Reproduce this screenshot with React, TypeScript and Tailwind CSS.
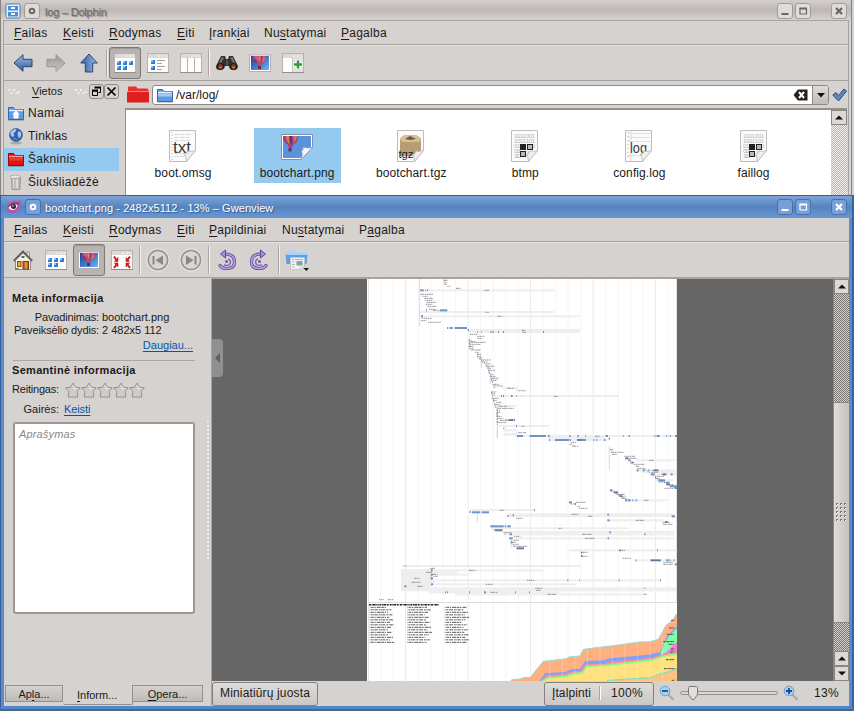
import React from "react";

const sans = "font-['Liberation_Sans',Arial,sans-serif]";

/* ---------- small shared pieces ---------- */

function Accel({ text, at }: { text: string; at: number }) {
  return (
    <>
      {text.slice(0, at)}
      <span className="underline decoration-1 underline-offset-2">{text[at]}</span>
      {text.slice(at + 1)}
    </>
  );
}

type MenuItem = [string, number, string];

function MenuBar({ items }: { items: MenuItem[] }) {
  return (
    <div className="flex h-[23px] shrink-0 items-center pl-[10px] text-[12px] tracking-[0.25px] text-[#1c1a19]">
      {items.map(([t, at, w]) => (
        <div key={t} className={`${w} shrink-0 whitespace-nowrap leading-[16px]`}>
          <Accel text={t} at={at} />
        </div>
      ))}
    </div>
  );
}

function WinButton({ blue, kind }: { blue?: boolean; kind: "min" | "max" | "close" | "pin" }) {
  const c = blue ? "#ffffff" : "#6b6664";
  return (
    <div
      className={`flex size-[16px] shrink-0 items-center justify-center rounded-[3px] border ${
        blue ? "border-[#4a70a8] bg-[#78a0d8]" : "border-[#a39d9a] bg-[#dfdcda]"
      }`}
    >
      <svg width="14" height="14" viewBox="0 0 14 14" fill="none" stroke={c} strokeWidth="2">
        {kind === "min" && <path d="M3.5 10h7" />}
        {kind === "max" && <path d="M4 4.500h6.500v5.500h-6.500z" strokeWidth="1.200" />}
        {kind === "max" && <path d="M3.500 4.500h7.500" />}
        {kind === "close" && <path d="M4 4l6 6M10 4l-6 6" strokeWidth="2.3" />}
        {kind === "pin" && <circle cx="7" cy="7" r="2.300" strokeWidth="1.900" />}
      </svg>
    </div>
  );
}

function Sep({ cls }: { cls: string }) {
  return <div className={`h-[28px] w-[2px] shrink-0 border-l border-[#aaa5a2] bg-[#f5f4f3] ${cls}`} />;
}

function Slot({ cls, children, on }: { cls?: string; children: React.ReactNode; on?: boolean }) {
  return (
    <div
      className={`flex h-[32px] w-[32px] shrink-0 items-center justify-center ${
        on ? "rounded-[3px] border border-[#7d7875] bg-[#b9b4b1] shadow-[inset_0_1px_1px_#9c9794]" : ""
      } ${cls ?? ""}`}
    >
      {children}
    </div>
  );
}

/* ---------- toolbar icons ---------- */

function Arrow({ rot, grey }: { rot: number; grey?: boolean }) {
  const id = `ar${rot}${grey ? "g" : ""}`;
  return (
    <svg width="22" height="22" viewBox="0 0 22 22">
      <defs>
        <linearGradient id={id} x1="0" y1="0" x2="0" y2="1">
          <stop offset="0" stopColor={grey ? "#c9c6c4" : "#9fbce4"} />
          <stop offset="1" stopColor={grey ? "#9b9896" : "#2f5a9b"} />
        </linearGradient>
      </defs>
      <g transform={`rotate(${rot} 11 11)`}>
        <path
          d="M2 11 L11 2.700 V7.300 H20 V14.700 H11 V19.300 Z"
          fill={`url(#${id})`}
          stroke={grey ? "#9a9795" : "#274877"}
          strokeWidth="1"
          strokeLinejoin="round"
        />
      </g>
    </svg>
  );
}

function ViewIcon({ kind }: { kind: "icons" | "details" | "columns" | "add" | "full" }) {
  return (
    <svg width="22" height="22" viewBox="0 0 22 22">
      <rect x=".5" y="1.5" width="21" height="19" fill="#fdfdfd" stroke="#b6b3b1" />
      <rect x="1" y="2" width="20" height="4" fill="#dcdad9" />
      <path d="M11 4h2M15 4h2M18.500 4h1.500" stroke="#fff" />
      <path d="M0 20.500h22" stroke="#918e8c" />
      {kind === "icons" &&
        [
          [3, 9],
          [9, 9],
          [15, 9],
          [3, 14],
          [9, 14],
        ].map(([x, y]) => (
          <g key={`${x}-${y}`}>
            <rect x={x} y={y} width="4" height="4" fill="#2f7bd6" />
            <rect x={x} y={y} width="2" height="2" fill="#8ec4f4" />
          </g>
        ))}
      {kind === "details" && (
        <>
          <rect x="4" y="8" width="4" height="4" fill="#2f7bd6" />
          <rect x="4" y="14" width="4" height="4" fill="#2f7bd6" />
          <path d="M4 9h2M4 15h2" stroke="#8ec4f4" strokeWidth="2" />
          <path d="M10 8.500h8M10 11.500h5M10 14.500h8M10 17.500h5" stroke="#a5a3a1" />
        </>
      )}
      {kind === "columns" && <path d="M7.500 6v14M14.500 6v14" stroke="#b3b0ae" />}
      {kind === "add" && (
        <>
          <rect x="10" y="6" width="11" height="14" fill="#e4e3e2" />
          <path d="M10.500 6v14" stroke="#c4c2c0" />
          <path d="M16 8v9M11.500 12.500h9" stroke="#fff" strokeWidth="4.500" />
          <path d="M16 8.500v8M12 12.500h8" stroke="#2ba12b" strokeWidth="2.500" />
        </>
      )}
      {kind === "full" && (
        <g fill="#d11a1a" stroke="#d11a1a">
          <path d="M3 7.500l2.500 3.500M19 7.500l-2.500 3.500M3 19l2.500-3.500M19 19l-2.500-3.500" strokeWidth="2" />
          <path d="M7 8.500v4H3.500zM15 8.500v4h3.500zM7 18v-4H3.500zM15 18v-4h3.500z" strokeWidth=".6" />
        </g>
      )}
    </svg>
  );
}

function Balloon({ uid }: { uid: string }) {
  return (
    <svg width="22" height="22" viewBox="0 0 22 22">
      <defs>
        <linearGradient id={uid} x1="0" y1="0" x2="1" y2="1">
          <stop offset="0" stopColor="#0d3f99" />
          <stop offset="1" stopColor="#6db4f5" />
        </linearGradient>
      </defs>
      <rect x=".5" y="3" width="21" height="16.500" fill="#fff" stroke="#b4b2b0" />
      <rect x="2" y="4" width="18" height="14" fill={`url(#${uid})`} />
      <path d="M4 4h13q1.500 5-4 8l-1.500 2.500h-2L8 12Q2.500 9 4 4z" fill="#b8457f" />
      <path d="M6 4h3l-.5 4-2-1zM13 4h3l-1 4-3 1z" fill="#dd4f9a" />
      <path d="M9 5l3-1v4l-2 2zM14 8l3-2q-1 3-4 5z" fill="#c98a3e" />
      <path d="M4 6q1 4 4.500 6L7 8zM12 4h1.500q0 4-2 7z" fill="#70357a" />
      <rect x="9" y="14" width="3" height="3" fill="#6d2f35" />
    </svg>
  );
}

function Binoculars() {
  return (
    <svg width="24" height="22" viewBox="0 0 24 22">
      <path d="M6 4l4 0 1 3h2l1-3h4l2 4 3 6q0 4-4.500 4T14 14h-4q-.5 4-5 4T1 14l3-6z" fill="#33302e" />
      <path d="M6.500 5l2.500 1-3 5-2 1zM15 6l2.500-1 3 7-2-1z" fill="#777471" />
      <circle cx="5.500" cy="14.500" r="3" fill="#7d4019" stroke="#111" />
      <circle cx="18.500" cy="14.500" r="3" fill="#7d4019" stroke="#111" />
      <path d="M4 15.500h3M17 15.500h3" stroke="#c9762e" strokeWidth="1.500" />
      <path d="M11 8v5h2V8z" fill="#55524f" />
    </svg>
  );
}

function House() {
  return (
    <svg width="20" height="22" viewBox="0 0 20 22">
      <rect x="14" y="3" width="2.500" height="6" fill="#eee" stroke="#777" strokeWidth=".7" />
      <path d="M2.500 11L10 4l7.500 7v9.500h-15z" fill="#f4efe3" stroke="#77736e" strokeWidth=".8" />
      <path d="M.8 12L10 2.500l9.200 9.500" fill="none" stroke="#55524f" strokeWidth="1.900" />
      <path d="M2 11.500L10 3.500l8 8" fill="none" stroke="#c4c1bd" strokeWidth=".7" strokeDasharray="2 1" />
      <path d="M8.500 8h3" stroke="#333" strokeWidth="1.500" />
      <rect x="4.500" y="12.500" width="3.500" height="5" fill="#f2a52a" stroke="#8a3f13" strokeWidth=".9" />
      <rect x="10" y="12.500" width="5.500" height="7.500" fill="#c96c1c" stroke="#6d3009" strokeWidth=".9" />
      <path d="M13 13v7" stroke="#f4ba4c" />
      <path d="M2 20h4" stroke="#4a8a31" strokeWidth="1.500" />
    </svg>
  );
}

function Nav({ next }: { next?: boolean }) {
  return (
    <svg width="24" height="24" viewBox="0 0 24 24">
      <circle cx="12" cy="12" r="9.700" fill="none" stroke="#f0efee" strokeWidth="3.500" />
      <circle cx="12" cy="12" r="9.700" fill="#d9d6d4" stroke="#999694" strokeWidth="1.800" />
      <g transform={next ? "matrix(-1 0 0 1 24 0)" : undefined} fill="#8a8785">
        <rect x="6.500" y="8" width="2" height="8.500" />
        <path d="M9.500 12.200L17 7.500v9.500z" />
      </g>
    </svg>
  );
}

function Rotate({ right }: { right?: boolean }) {
  return (
    <svg width="20" height="22" viewBox="0 0 20 22">
      <g transform={right ? "matrix(-1 0 0 1 20 0)" : undefined} fill="none">
        <path d="M8 5q9.500 0 9.500 8 0 6.500-7.500 6.500-5 0-7-3" stroke="#5f459a" strokeWidth="3.200" strokeLinecap="round" />
        <path d="M8 5q9.500 0 9.500 8 0 6.500-7.500 6.500-5 0-7-3" stroke="#b7a2e2" strokeWidth="1.600" strokeLinecap="round" />
        <path d="M3.500 5L8.500 1v8z" fill="#a992dc" stroke="#5f459a" strokeLinejoin="round" />
        <path d="M7 16q5.500 1.500 6.500-2.500 0-3-2.500-3.500" stroke="#8267bd" strokeWidth="1.400" />
        <circle cx="9.500" cy="12.500" r="1.500" fill="#7657b5" />
      </g>
    </svg>
  );
}

function FolderPage() {
  return (
    <svg width="26" height="26" viewBox="0 0 26 26">
      <path d="M3 5q0-2 2-2h5l2 2h9q2 0 2 2v8H3z" fill="#b5d2f0" />
      <path d="M1.500 7h22l-1 10h-20z" fill="#5f9fe4" />
      <path d="M2 7.500h21" stroke="#a7d0f8" />
      <path d="M6.500 10.500h14v9l-4 3h-10z" fill="#f2f2f1" stroke="#c5c4c3" />
      <path d="M8 12.500h2M11 12.500h8M8 15h2.500M8 17.500h2.500M8 20h2.500" stroke="#a9b2bc" />
      <rect x="12.500" y="14" width="6" height="3.500" fill="#68a7dc" />
      <path d="M12.500 16h6V18.500h-6z" fill="#9aab58" />
      <path d="M16 22.500l4.500-4-4.500 1z" fill="#fff" stroke="#bbb" strokeWidth=".6" />
      <path d="M19.500 21h5.500l-2.700 3z" fill="#111" />
    </svg>
  );
}

/* ---------- folders, places and files ---------- */

function Folder({ red, home }: { red?: boolean; home?: boolean }) {
  const a = red ? "#e21212" : "#5b9be4";
  const b = red ? "#a80000" : "#2f69b7";
  return (
    <svg width="18" height="16" viewBox="0 0 18 16">
      <path d="M1.500 14.500v-12h5l1.500 2h8.500v10z" fill={a} stroke={b} />
      <path d="M2 5.500h14" stroke={red ? "#ff9a96" : "#e0effd"} strokeWidth="1.500" />
      {!home && <path d="M2 6.500h14v3H2z" fill={red ? "#ea3a36" : "#a5caf3"} />}
      {home && <path d="M9 5.500l4 4h-1.500v4h-5v-4H5z" fill="#fff" />}
      <path d="M1 15.500h16" stroke="#00000030" />
    </svg>
  );
}

function Globe() {
  return (
    <svg width="18" height="18" viewBox="0 0 18 18">
      <ellipse cx="9" cy="16" rx="6" ry="1.500" fill="#aaa7a5" />
      <circle cx="9" cy="8" r="6.500" fill="#2f61b0" stroke="#2a5292" strokeWidth=".6" />
      <path d="M3.500 5q3-3.500 6-3l-1 3-2 1 1 3-2 1-2-2zM11.500 4q2 0 3 3l-1 3-2 1-1-4z" fill="#a9c8ec" />
      <path d="M6 12q3-1 4 1" stroke="#6c9fdb" fill="none" />
    </svg>
  );
}

function Trash() {
  return (
    <svg width="18" height="18" viewBox="0 0 18 18">
      <path d="M4.500 5h9l-.7 11.500H5.200z" fill="#c4c2c0" stroke="#9c9997" />
      <path d="M7 6v9M9 6v9M11 6v9" stroke="#f0efee" />
      <path d="M8 6v9M12 6v9" stroke="#949290" strokeWidth=".7" />
      <path d="M3 3l6-1 5 1.500-1 1.500-9 .5z" fill="#ebeae9" stroke="#a6a3a1" strokeWidth=".8" />
    </svg>
  );
}

function PageIcon({ kind }: { kind: "txt" | "tgz" | "bin" | "log" }) {
  return (
    <svg width="28" height="33" viewBox="0 0 28 33">
      <path d="M.5.5h26v20l-9 11H.5z" fill="#fbfbfb" stroke="#bdbdbc" />
      {kind === "txt" && (
        <>
          <path d="M3 2v28" stroke="#b9b9b9" strokeDasharray="1 2" />
          <path d="M5 4.500h17M5 7.500h15M5 10.500h16M5 23.500h12M5 26.500h10" stroke="#dadada" strokeDasharray="5 1" />
          <text x="4" y="22.500" fontSize="16" fill="#3a3a3a" textLength="18" lengthAdjust="spacingAndGlyphs">txt</text>
        </>
      )}
      {kind === "log" && (
        <>
          <path d="M3 2v28" stroke="#b0b0b0" strokeDasharray="1 3" />
          <path d="M6 1v30" stroke="#f3cfdb" />
          <path d="M3 3.500h22M3 7.500h22M3 11.500h22M3 25.500h15" stroke="#d7e2ee" />
          <text x="5" y="23" fontSize="15" fill="#3a3a3a" textLength="17" lengthAdjust="spacingAndGlyphs">log</text>
        </>
      )}
      {kind === "bin" && (
        <>
          <g fontSize="6" fill="#b4b4b4">
            <text x="3" y="8" textLength="21">1011001</text>
            <text x="3" y="13" textLength="21">1001101</text>
            <text x="3" y="18" textLength="21">0110110</text>
            <text x="3" y="23" textLength="7">011</text>
            <text x="3" y="28" textLength="7">110</text>
          </g>
          <rect x="9.500" y="14.500" width="5" height="5" fill="#222" stroke="#222" />
          <rect x="16.500" y="14.500" width="5" height="5" fill="#b8b8b8" stroke="#222" />
          <rect x="9.500" y="21.500" width="5" height="5" fill="#b8b8b8" stroke="#222" />
        </>
      )}
      {kind === "tgz" && (
        <>
          <path d="M3 9q3-4 6-4h8q4 0 7 4v12l-5 5H3z" fill="#b99d72" />
          <path d="M3 9q3-4 6-4h8q4 0 7 4l-2 3H5z" fill="#d5bf98" />
          <path d="M8 9l5-3 6 3-6 1z" fill="#6e5a3a" />
          <text x="1.500" y="28" fontSize="11" fill="#222" textLength="15" lengthAdjust="spacingAndGlyphs">tgz</text>
        </>
      )}
      <path d="M17 31.500q-.5-5-2.500-6l2-4.500q5 .5 10-.5z" fill="#00000018" />
      <path d="M17.500 31.500q0-5-2-6.500 3-1 3-4 3.500 1 8-.5z" fill="#efefef" stroke="#b4b4b4" strokeWidth=".7" />
    </svg>
  );
}

function PngIcon() {
  return (
    <svg width="32" height="26" viewBox="0 0 32 26">
      <path d="M.5.5h31v13L20 25.500H.5z" fill="#fff" stroke="#7e93ab" />
      <path d="M2 2h28v11.500L19.500 24H2z" fill="#5a92dc" />
      <path d="M2 2h15q1 5-5 9l-1.500 3H8L7 11Q1 7 2 2z" fill="#a83a80" />
      <path d="M5 2h3q-1 4 1 9-4-4-4-9zM13.500 2H16q0 4-4 8 2-4 1.500-8z" fill="#d8853a" />
      <path d="M9 2h2l-.5 8H9.500z" fill="#463184" />
      <path d="M11.500 2h2l-1 5z" fill="#e7569c" />
      <rect x="7.500" y="14" width="3" height="3.500" fill="#733242" />
      <path d="M20 25.500q2-5 .5-8.500 2-1 1.500-4 5 1.500 9.500.5z" fill="#f4f5f8" stroke="#8797aa" strokeWidth=".8" />
    </svg>
  );
}

const files: { name: string; kind: "txt" | "tgz" | "bin" | "log" | "png" }[] = [
  { name: "boot.omsg", kind: "txt" },
  { name: "bootchart.png", kind: "png" },
  { name: "bootchart.tgz", kind: "tgz" },
  { name: "btmp", kind: "bin" },
  { name: "config.log", kind: "log" },
  { name: "faillog", kind: "bin" },
];

const places = [
  { name: "Namai", icon: <Folder home /> },
  { name: "Tinklas", icon: <Globe /> },
  { name: "Šakninis", icon: <Folder red />, on: true },
  { name: "Šiukšliadėžė", icon: <Trash /> },
];

function ScrollBtn({ down, cls }: { down?: boolean; cls?: string }) {
  return (
    <div className={`flex h-[15px] shrink-0 items-center justify-center border border-[#8b8683] bg-[#dcd9d6] ${cls ?? ""}`}>
      <svg width="8" height="5" viewBox="0 0 8 5">
        <path d={down ? "M0 .5h8L4 4.500z" : "M0 4.500h8L4 .5z"} fill="#111" />
      </svg>
    </div>
  );
}

function Dots() {
  return (
    <svg width="13" height="7" viewBox="0 0 13 7" fill="#f0efee">
      <path d="M0 1h2v2H0zM5 1h2v2H5zM2.500 4h2v2h-2zM7.500 4h2v2h-2zM10 3h2v2h-2z" />
    </svg>
  );
}

/* ---------- boot chart ---------- */

type Seg = [number, number, number];

const topGrey: Seg[] = [
  [165, 567, 37], [165, 567, 102], [165, 642, 115], [310, 648, 156], [310, 642, 162],
  [414, 456, 330], [385, 762, 354], [385, 454, 384], [400, 552, 444], [414, 454, 457],
  [414, 454, 469], [456, 936, 474], [550, 730, 486], [550, 720, 480],
];
const topBlue: Seg[] = [
  [166, 176, 37], [180, 182, 37], [186, 189, 37], [224, 247, 97], [183, 186, 97],
  [168, 174, 115], [246, 250, 150], [254, 263, 150], [269, 306, 150],
  [308, 312, 156], [337, 339, 162], [348, 350, 162], [376, 379, 162], [382, 386, 162], [399, 402, 162], [414, 417, 162], [534, 537, 162],
  [456, 474, 474], [494, 543, 474], [549, 554, 474], [613, 617, 474], [637, 641, 474], [660, 662, 474], [722, 729, 474], [774, 776, 474], [791, 795, 474], [868, 871, 474], [875, 884, 474], [904, 907, 474], [915, 918, 474], [930, 936, 474],
  [552, 555, 486], [570, 612, 486], [614, 618, 486], [636, 663, 486], [685, 688, 486], [694, 697, 486], [717, 721, 486], [731, 735, 482],
  [438, 443, 354], [408, 411, 354], [414, 417, 354], [454, 456, 354], [453, 456, 444], [431, 444, 426], [446, 450, 426],
];
const topMarks: Seg[] = [
  [237, 249, 7], [238, 246, 13], [239, 245, 19], [247, 256, 25], [273, 288, 31], [357, 373, 37],
  [167, 204, 49], [172, 190, 55], [178, 204, 61], [180, 205, 67], [185, 215, 73], [182, 202, 79], [187, 214, 85],
  [192, 214, 94], [204, 222, 97], [361, 371, 103], [397, 412, 115], [171, 200, 121], [169, 184, 128], [189, 228, 133],
  [471, 481, 157], [472, 483, 163], [314, 338, 169], [337, 360, 175], [338, 352, 181],
  [312, 320, 187], [314, 363, 193], [314, 346, 199], [315, 326, 205], [314, 325, 211], [318, 348, 216],
  [331, 341, 223], [337, 350, 229], [337, 348, 235], [343, 352, 240], [348, 378, 246], [350, 368, 252],
  [361, 379, 258], [362, 388, 265], [367, 378, 271], [370, 390, 277], [370, 377, 283], [377, 386, 290],
  [377, 394, 296], [380, 400, 301], [378, 397, 307], [387, 404, 319], [389, 413, 324], [427, 446, 331],
  [461, 484, 338], [378, 394, 342], [379, 391, 348], [567, 580, 355], [380, 402, 361], [384, 395, 367],
  [394, 411, 373], [390, 406, 379], [400, 426, 385], [397, 447, 391], [396, 405, 397], [394, 408, 403],
  [394, 400, 409], [394, 410, 415], [397, 415, 421], [405, 448, 427], [395, 424, 433], [470, 478, 445],
  [414, 421, 451], [460, 484, 464], [427, 446, 469], [690, 705, 475], [637, 650, 486], [617, 634, 493], [613, 622, 499], [622, 640, 505],
];
const midGrey: Seg[] = [
  [415, 455, 13], [812, 930, 91], [815, 930, 121], [830, 932, 126], [860, 935, 133], [870, 928, 151], [780, 906, 211],
  [315, 510, 240], [428, 928, 253], [428, 928, 258], [728, 896, 271], [378, 790, 295], [410, 928, 306], [420, 928, 313],
  [430, 926, 325], [612, 936, 361], [811, 932, 391], [114, 648, 408], [108, 534, 421], [108, 278, 427], [108, 306, 434],
  [108, 197, 440], [108, 197, 446], [108, 888, 451], [108, 210, 457], [108, 635, 463], [108, 933, 475], [108, 933, 481],
  [193, 582, 487], [276, 846, 493], [370, 740, 478],
];
const midBlue: Seg[] = [
  [780, 790, 85], [790, 797, 91], [797, 805, 98], [815, 821, 121], [833, 839, 121], [850, 853, 121], [867, 880, 121], [857, 869, 133], [893, 904, 133], [917, 923, 133],
  [880, 900, 151], [902, 914, 158], [905, 914, 163], [914, 936, 169], [928, 936, 174],
  [736, 741, 181], [746, 759, 187], [763, 772, 197], [780, 786, 211], [788, 797, 211], [802, 805, 211], [812, 816, 211],
  [612, 621, 217], [630, 633, 222], [314, 318, 246], [321, 346, 247], [350, 372, 247], [507, 510, 240], [427, 432, 258], [443, 447, 256], [727, 732, 254], [920, 930, 259],
  [727, 734, 271], [900, 908, 276], [376, 416, 289], [419, 424, 289], [427, 437, 289], [390, 412, 301],
  [434, 441, 313], [433, 443, 325], [437, 442, 337], [455, 477, 355], [733, 738, 307], [838, 842, 313], [728, 732, 325],
  [762, 766, 361], [876, 879, 361], [648, 652, 368], [648, 652, 378], [811, 814, 391], [857, 888, 391], [904, 911, 391], [914, 917, 391], [926, 929, 391], [929, 936, 403],
  [198, 203, 421], [197, 203, 434], [197, 204, 445], [198, 204, 463], [118, 124, 469], [607, 610, 451], [642, 644, 451], [761, 764, 451], [885, 888, 451],
  [240, 243, 487], [246, 249, 487], [312, 315, 487], [357, 363, 487], [450, 453, 487], [492, 495, 487],
];
const midMarks: Seg[] = [
  [735, 745, 59], [738, 776, 67], [741, 756, 73], [778, 811, 79], [785, 816, 85], [852, 866, 91], [796, 810, 97], [806, 840, 103],
  [812, 822, 109], [817, 840, 115], [862, 880, 121], [860, 880, 127], [890, 904, 133], [870, 897, 139], [870, 885, 145], [880, 900, 156],
  [903, 926, 164], [898, 924, 175], [735, 748, 181], [747, 760, 187], [755, 780, 193], [763, 782, 199], [769, 787, 205], [837, 850, 211],
  [633, 663, 217], [617, 632, 222], [638, 645, 229], [642, 668, 235], [405, 416, 241], [619, 640, 253], [670, 684, 259], [453, 473, 265],
  [812, 837, 271], [892, 914, 277], [894, 924, 283], [581, 591, 295], [386, 413, 300], [416, 440, 308], [652, 682, 313], [447, 466, 319],
  [660, 688, 325], [445, 460, 331], [440, 452, 337], [443, 462, 343], [444, 487, 349], [455, 477, 355], [764, 781, 361], [648, 668, 367],
  [648, 668, 379], [773, 798, 385], [858, 885, 391], [895, 925, 397], [895, 923, 403], [195, 212, 415], [312, 331, 421], [183, 200, 427],
  [203, 217, 433], [205, 219, 439], [148, 165, 445], [486, 510, 451], [141, 166, 457], [362, 384, 463], [157, 174, 469], [511, 532, 475],
  [514, 528, 481], [376, 398, 487], [548, 573, 493], [42, 56, 509], [68, 86, 509],
];

function Bars({ data, fill, h }: { data: Seg[]; fill: string; h: number }) {
  return (
    <g fill={fill}>
      {data.map(([a, b, y], i) => (
        <rect key={i} x={a} y={y - h / 2} width={b - a} height={h} />
      ))}
    </g>
  );
}

function Marks({ data }: { data: Seg[] }) {
  return (
    <g stroke="#4a4a52" strokeWidth="2.500" opacity=".7">
      {data.map(([a, b, y], i) => (
        <path key={i} d={`M${a} ${y}H${b}`} strokeDasharray={i % 2 ? "4 2 5 1 3 2" : "6 1 4 2 3 1"} />
      ))}
    </g>
  );
}

const legendColors = ["#ffb060", "#ff8a80", "#80c880", "#80e0e0", "#a080ff", "#e080e0"];
const top = "M437 274L440 269L466 267L475 263L496 262L535 214L570 210L604 206L612 201L645 198L655 178L685 174L728 169L775 163L822 156L855 155L880 148L893 124L903 106L922 92L936 70";

function BootChart() {
  const grid = Array.from({ length: 25 }, (_, i) => 380.600 + i * 12.500);
  return (
    <svg className="block shrink-0" width="310" height="402" viewBox="367 279 310 402">
      <rect x="367" y="279" width="310" height="402" fill="#fff" />
      {grid.map((x, i) => (
        <path key={i} d={`M${x} 279V681`} stroke={i % 5 === 2 ? "#ebebeb" : "#f5f5f5"} strokeWidth="1" />
      ))}
      <path d="M368.500 279V681M676.500 279V602" stroke="#e2e2e2" />
      <path d="M368 602.500H677" stroke="#dcdcdc" />
      <g transform="translate(365 278) scale(.33333)">
        <path d="M164 3V145M349 240V270M376 290V318M397 385V480M455 326V340M454 460V476M313 183V216M237 3V22" stroke="#c9c9c9" strokeWidth="2" fill="none" />
        <Bars data={topGrey} fill="#eeeeee" h={6} />
        <Bars data={topBlue} fill="#6d94c4" h={6} />
        <Marks data={topMarks} />
        <path d="M313 185V212M338 226V238L348 246L368 264L376 292L388 330M380 342L388 378L397 398V440" stroke="#7294bd" strokeWidth="3" strokeDasharray="5 4" fill="none" />
        <path d="M317 191h14M420 426h10M197 49h6M408 324h5M469 354h3" stroke="#e0a0a0" strokeWidth="3" />
      </g>
      <g transform="translate(365 430) scale(.33333)">
        <rect x="108" y="418" width="89" height="64" fill="#ececec" />
        <path d="M733 50V120M337 250V276M397 0V24M439 325V352" stroke="#c9c9c9" strokeWidth="2" />
        <Bars data={midGrey} fill="#eeeeee" h={6} />
        <Bars data={midBlue} fill="#6d94c4" h={6} />
        <path d="M838 116L857 130L875 145L910 163L933 172M738 182L782 208M200 416V450" stroke="#7294bd" strokeWidth="3" strokeDasharray="4 4" fill="none" />
        <Marks data={midMarks} />
        <path d="M115 408h11M235 475h2M835 475h7M834 493h12M622 48h10M428 258h4M417 313h5M738 66h6M795 97h6" stroke="#e4a6a6" strokeWidth="3" />
      </g>
      <g transform="translate(365 590) scale(.33333)">
        <path d="M12 44H222" stroke="#222" strokeWidth="4.500" strokeDasharray="6 2 3 1 8 2 4 1 2 2" />
        {[0, 1, 2].map((c) =>
          Array.from({ length: 15 }, (_, r) => {
            const x = 13 + c * 113;
            const y = 52 + r * 7.500;
            return (
              <g key={`${c}-${r}`} strokeWidth="3">
                <path d={`M${x} ${y}h4`} stroke={legendColors[(r * 2 + c) % 6]} />
                <path d={`M${x + 5} ${y}h${48 + ((r * 13 + c * 7) % 23)}`} stroke="#3c3c3c" strokeDasharray={r % 2 ? "5 2 3 1 9 3" : "8 2 4 3 12 2"} opacity=".85" />
              </g>
            );
          }),
        )}
        <path d={`${top}V274Z`} fill="#ffb080" />
        <path d="M522 274L540 250L600 246L620 238L645 236L660 213L715 211L735 205L850 194L885 186L905 140L936 108V274Z" fill="#809fff" />
        <path d="M885 194L898 160L915 135L936 115V190Z" fill="#80ffa8" />
        <path d="M900 190L936 155V195L880 202Z" fill="#f07fd0" />
        <path d="M526 274L545 256L600 252L622 244L648 242L660 223L715 221L735 215L862 203L890 193L936 186V274Z" fill="#ff9090" />
        <path d="M528 274L548 261L600 257L625 248L650 246L664 227L730 223L862 208L890 197L936 189V274Z" fill="#80ff80" />
        <path d="M534 274L550 266L605 262L625 254L652 251L666 232L730 228L862 213L890 202L936 195V274Z" fill="#ffe180" />
        <path d="M730 274L760 270L858 264L885 254L910 247L936 236V274Z" fill="#ffc080" />
        <path d="M725 272L760 269L858 263L885 252L910 246L936 235" stroke="#80dfc0" strokeWidth="4" fill="none" />
        <path d={top} fill="none" stroke="#90ddd8" strokeWidth="3" />
        <path d="M918 91h10M912 114h15M905 133h22M895 155h33M911 163h15M918 177h10M916 186h11M903 209h25M897 236h32M920 271h8" stroke="#554040" strokeWidth="3" strokeDasharray="6 1 3 1" />
        {[555, 592, 630, 667, 705, 742, 780, 817, 855, 892].map((x) => (
          <path key={x} d={`M${x} 110V274`} stroke="#ffffff" opacity=".25" strokeWidth="3" />
        ))}
      </g>
    </svg>
  );
}

/* ---------- windows ---------- */

const checker = "bg-[repeating-conic-gradient(#f2f1f0_0_25%,#b8b4b1_0_50%)] bg-[length:2px_2px]";

function Dolphin() {
  return (
    <div className="h-[195px] w-[852px] shrink-0 overflow-hidden border-l border-r border-[#8b8582] bg-[#d6d2d0]">
      <div className="flex h-[20px] items-center bg-gradient-to-b from-[#d4cfcd] via-[#beb7b4] to-[#d6d2cf] pl-[4px] pt-[1px]">
        <svg width="16" height="16" viewBox="0 0 16 16" className="mr-[3px] shrink-0">
          <rect x="1" y="1" width="14" height="14" rx="1.500" fill="#eaf3fc" stroke="#477db8" />
          <rect x="3" y="3" width="10" height="4.500" fill="#4e8cd0" />
          <rect x="3" y="9" width="10" height="4.500" fill="#4e8cd0" />
          <path d="M6 5h4M6 11h4" stroke="#fff" strokeWidth="2" />
        </svg>
        <WinButton kind="pin" />
        <div className="ml-[5px] flex-1 pt-[2px] text-[11px] leading-[16px] tracking-[-0.2px] text-[#6d6866] [text-shadow:1px_1px_0_#958f8c]">log – Dolphin</div>
        <WinButton kind="min" />
        <div className="w-[2px]" />
        <WinButton kind="max" />
        <div className="w-[20px]" />
        <WinButton kind="close" />
        <div className="w-[4px]" />
      </div>
      <div className="ml-[2px] mr-[2px] h-[175px] border-l border-r border-t border-[#aaa4a1]">
        <MenuBar
          items={[
            ["Failas", 0, "w-[49px]"],
            ["Keisti", 0, "w-[46px]"],
            ["Rodymas", 0, "w-[68px]"],
            ["Eiti", 0, "w-[32px]"],
            ["Įrankiai", 5, "w-[55px]"],
            ["Nustatymai", 2, "w-[77px]"],
            ["Pagalba", 0, "w-[60px]"],
          ]}
        />
        <div className="flex h-[37px] items-center border-b border-t border-[#a7a19e] pl-[3px] pt-[1px] shadow-[inset_0_1px_0_#e6e3e1]">
          <Slot><Arrow rot={0} /></Slot>
          <Slot cls="ml-[1px]"><Arrow rot={180} grey /></Slot>
          <Slot cls="ml-[1px]"><Arrow rot={90} /></Slot>
          <Sep cls="ml-[1px]" />
          <Slot on cls="ml-[1px]"><ViewIcon kind="icons" /></Slot>
          <Slot cls="ml-[1px]"><ViewIcon kind="details" /></Slot>
          <Slot cls="ml-[1px]"><ViewIcon kind="columns" /></Slot>
          <Sep cls="ml-[1px]" />
          <Slot cls="ml-[1px]"><Binoculars /></Slot>
          <Slot cls="ml-[1px]"><Balloon uid="bl1" /></Slot>
          <Slot cls="ml-[1px]"><ViewIcon kind="add" /></Slot>
        </div>
        <div className="flex h-[114px]">
          <div className="w-[121px] shrink-0">
            <div className="flex h-[21px] items-center pl-[4px] text-[11px] text-[#1c1a19]">
              <Dots />
              <span className="ml-[11px] w-[43px]"><Accel text="Vietos" at={0} /></span>
              <Dots />
              {["f", "c"].map((k) => (
                <div key={k} className="ml-[2px] flex size-[13px] shrink-0 items-center justify-center rounded-[2px] outline outline-[#908a87]">
                  <svg width="11" height="11" viewBox="0 0 11 11" fill="none" stroke="#000">
                    {k === "f" ? (
                      <>
                        <path d="M4 1.500h5.500v5H7.500M1.500 5h5v4.500h-5z" />
                        <path d="M3.500 1.500h6.500M1 4.500h6" strokeWidth="2" />
                      </>
                    ) : (
                      <path d="M1.500 1.500l8 8M9.500 1.500l-8 8" strokeWidth="1.700" />
                    )}
                  </svg>
                </div>
              ))}
            </div>
            {places.map((p) => (
              <div
                key={p.name}
                className={`flex h-[23px] w-[115px] items-center pb-[2px] pl-[3px] text-[12px] tracking-[0.3px] text-[#1c1a19] ${p.on ? "bg-[#94caef]" : ""}`}
              >
                {p.icon}
                <span className="ml-[3px]">{p.name}</span>
              </div>
            ))}
          </div>
          <div className="flex flex-1 flex-col">
            <div className="flex h-[27px] shrink-0 items-center pt-[1px]">
              <svg width="24" height="20" viewBox="0 0 24 20" className="ml-[1px] shrink-0">
                <path d="M2 17V2.500q0-1 1-1h7l1.500 2H21q1.500 0 1.500 1.500v12z" fill="#ee2d2d" />
                <path d="M1 7h22v10.500H1z" fill="#df2020" />
                <path d="M1.500 6.500h21" stroke="#ff7d7a" />
              </svg>
              <div className="ml-[2px] flex h-[20px] flex-1 items-stretch overflow-hidden rounded-[3px] border border-[#8e8885] bg-white">
                <div className="flex flex-1 items-center pl-[3px] text-[12px] text-[#1c1a19]">
                  <Folder />
                  <span className="ml-[2px] flex-1">/var/log/</span>
                  <svg width="15" height="12" viewBox="0 0 15 12" className="mr-[4px]">
                    <path d="M.5 6L5 .5h9.500v11H5z" fill="#222" />
                    <path d="M6 3l5 6M11 3L6 9" stroke="#fff" strokeWidth="2" />
                  </svg>
                </div>
                <div className="flex w-[16px] items-center justify-center border-l border-[#8e8885] bg-gradient-to-b from-[#dedbd9] to-[#bfbbb7]">
                  <svg width="8" height="5" viewBox="0 0 8 5"><path d="M0 0h8L4 4.500z" fill="#111" /></svg>
                </div>
              </div>
              <svg width="15" height="14" viewBox="0 0 15 14" className="ml-[3px] mr-[1px] shrink-0">
                <path d="M.8 7L4 4.500 6.500 7.500 12 1l2.500 2L7 12.500H6z" fill="#5b87bd" stroke="#294b77" strokeLinejoin="round" />
              </svg>
            </div>
            <div className="mr-[1px] flex flex-1 border-l border-t-2 border-[#97918e] bg-white">
              <div className="flex flex-1 pt-[18px]">
                {files.map((f) => (
                  <div key={f.name} className="flex w-[114.100px] shrink-0 justify-center">
                    <div className={`flex h-[55px] w-[87px] flex-col items-center ${f.kind === "png" ? "bg-[#94caef]" : ""}`}>
                      <div className="flex h-[37px] items-center justify-center">
                        {f.kind === "png" ? <PngIcon /> : <PageIcon kind={f.kind} />}
                      </div>
                      <div className="whitespace-nowrap text-[12px] leading-[17px] tracking-[0.1px] text-[#1c1a19]">{f.name}</div>
                    </div>
                  </div>
                ))}
              </div>
              <div className={`w-[16px] shrink-0 ${checker}`}>
                <ScrollBtn />
              </div>
            </div>
          </div>
        </div>
      </div>
    </div>
  );
}

function Star() {
  return (
    <svg width="16" height="16" viewBox="0 0 16 16">
      <path d="M8 1l2.300 4.300 5 .5-3.300 3.700.8 5.500H3.200L4 9.500.7 5.800l5-.5z" fill="#cfcdcb" stroke="#94918f" strokeLinejoin="round" />
      <path d="M8 3l1.300 3.300 3 .4" stroke="#f5f5f5" fill="none" />
    </svg>
  );
}

function Magnifier({ plus }: { plus?: boolean }) {
  return (
    <svg width="16" height="16" viewBox="0 0 16 16">
      <path d="M9.500 9.500l5 5" stroke="#8f8d8b" strokeWidth="2" />
      <path d="M10 9.500l4.500 4.500" stroke="#f0efee" strokeWidth=".8" />
      <circle cx="6" cy="6" r="4.800" fill="#a4d2f4" stroke="#7a9cc0" />
      <path d={plus ? "M3 6h6M6 3v6" : "M3 6h6"} stroke="#134f9e" strokeWidth="1.800" />
    </svg>
  );
}

function Sidebar() {
  return (
    <div className="flex w-[208px] shrink-0 flex-col border-r border-[#aaa4a1] text-[11px] leading-[13px] text-[#1c1a19]">
      <div className="flex flex-1">
        <div className="w-[183px] pl-[8px]">
          <div className="pt-[14px] font-bold tracking-[0.3px]">Meta informacija</div>
          <div className="mt-[6px] grid w-[183px] grid-cols-[87px_1fr] gap-x-[4px] whitespace-nowrap">
            <div className="text-right tracking-[-0.150px]">Pavadinimas:</div>
            <div className="-ml-px">bootchart.png</div>
            <div className="text-right tracking-[-0.130px]">Paveiksėlio dydis:</div>
            <div className="-ml-px">2 482x5 112</div>
          </div>
          <div className="mt-[2px] w-[181px] text-right text-[#0057ae]">
            <span className="underline underline-offset-2">Daugiau...</span>
          </div>
          <div className="ml-[1px] mt-[8px] h-[1px] w-[182px] bg-[#aea6a2]" />
          <div className="mt-[3px] font-bold tracking-[0.3px]">Semantinė informacija</div>
          <div className="mt-[4px] flex h-[17px] w-[183px] items-center">
            <span className="w-[53px] tracking-[-0.2px]">Reitingas:</span>
            {[0, 1, 2, 3, 4].map((i) => <Star key={i} />)}
          </div>
          <div className="mt-[5px] flex">
            <span className="w-[47px] text-right">Gairės:</span>
            <span className="ml-[5px] tracking-[-0.1px] text-[#0057ae] underline underline-offset-2">Keisti</span>
          </div>
          <div className="ml-[1px] mt-[6px] h-[192px] w-[182px] rounded-[3px] border-2 border-[#9d9895] bg-white pl-[4px] pt-[4px] italic tracking-[0.150px] text-[#8d8987]">
            Aprašymas
          </div>
        </div>
        <div className="ml-[19px] mt-[143px] h-[139px] w-[4px] bg-[radial-gradient(circle_at_2px_1px,#f4f3f2_1px,#b5b0ad_1.300px,transparent_1.700px)] bg-[length:4px_4px]" />
      </div>
      <div className="flex h-[28px] items-start pt-[7px]">
        <div className="ml-[1px] h-[17px] w-[58px] border border-[#96908d] bg-gradient-to-b from-[#d4d1ce] to-[#bfbbb8] pt-[2px] text-center">
          <Accel text="Apla..." at={2} />
        </div>
        <div className="h-[20px] w-[70px] rounded-b-[2px] border-b border-r border-[#96908d] pl-[14px] pt-[4px]">
          <Accel text="Inform..." at={0} />
        </div>
        <div className="h-[17px] w-[70px] border border-l-0 border-[#96908d] bg-gradient-to-b from-[#d4d1ce] to-[#bfbbb8] pt-[2px] text-center">
          <Accel text="Opera..." at={0} />
        </div>
      </div>
    </div>
  );
}

function Gwenview() {
  return (
    <div className="flex h-[514px] w-[853px] shrink-0 flex-col border-b-[3px] border-l border-r border-t border-[#36609b] bg-[#5b8bcb] border-b-[#5286ca]">
      <div className="flex h-[22px] shrink-0 items-center bg-gradient-to-b from-[#7da4d8] via-[#5684c0] to-[#6998d3] pl-[5px] pr-[5px]">
        <svg width="16" height="16" viewBox="0 0 16 16" className="mr-[3px] shrink-0">
          <path d="M1 9Q1 2 9 2q5 0 6-1-1 4-1 6-2 7-8 7-5-1-5-5z" fill="#c44fa6" />
          <path d="M2.500 8.500q4-4 9-2.500-1 5-5 5-3 0-4-2.500z" fill="#fff" />
          <circle cx="7.500" cy="7.500" r="2.500" fill="#23283b" />
          <circle cx="7" cy="7" r=".8" fill="#fff" />
          <path d="M2 8q5-6 11-3" stroke="#7c2b6c" fill="none" />
        </svg>
        <WinButton blue kind="pin" />
        <div className="ml-[4px] flex-1 whitespace-nowrap pt-[2px] text-[11px] leading-[16px] tracking-[0.070px] text-white [text-shadow:1px_1px_1px_#31598f]">
          bootchart.png - 2482x5112 - 13% – Gwenview
        </div>
        <WinButton blue kind="min" />
        <div className="w-[2px]" />
        <WinButton blue kind="max" />
        <div className="w-[20px]" />
        <WinButton blue kind="close" />
      </div>
      <div className="ml-[3px] mr-[3px] flex flex-1 flex-col bg-[#d6d2d0]">
        <MenuBar
          items={[
            ["Failas", 0, "w-[49px]"],
            ["Keisti", 0, "w-[46px]"],
            ["Rodymas", 0, "w-[68px]"],
            ["Eiti", 0, "w-[32px]"],
            ["Papildiniai", 0, "w-[73px]"],
            ["Nustatymai", 2, "w-[77px]"],
            ["Pagalba", 1, "w-[60px]"],
          ]}
        />
        <div className="flex h-[37px] shrink-0 items-center border-b border-t border-[#a7a19e] pl-[3px] shadow-[inset_0_1px_0_#e6e3e1]">
          <Slot><House /></Slot>
          <Slot cls="ml-[1px]"><ViewIcon kind="icons" /></Slot>
          <Slot on cls="ml-[1px]"><Balloon uid="bl2" /></Slot>
          <Slot cls="ml-[1px]"><ViewIcon kind="full" /></Slot>
          <Sep cls="ml-[1px]" />
          <Slot cls="ml-[1px]"><Nav /></Slot>
          <Slot cls="ml-[1px]"><Nav next /></Slot>
          <Sep cls="ml-[1px]" />
          <Slot cls="ml-[1px]"><Rotate /></Slot>
          <Slot><Rotate right /></Slot>
          <Sep cls="ml-[3px]" />
          <Slot cls="ml-[1px]"><FolderPage /></Slot>
        </div>
        <div className="flex h-[428px]">
          <Sidebar />
          <div className="flex flex-1 flex-col">
            <div className="flex h-[403px] border-t border-[#aaa4a1]">
              <div className="relative flex flex-1 bg-[#666666] pl-[155px]">
                <div className="absolute left-0 top-[60px] flex h-[38px] w-[11px] items-center justify-center rounded-r-[4px] bg-[#909090]">
                  <svg width="5" height="10" viewBox="0 0 5 10"><path d="M5 0v10L0 5z" fill="#5f5f5f" /></svg>
                </div>
                <BootChart />
              </div>
              <div className="flex w-[16px] shrink-0 flex-col border-l border-[#8b8683]">
                <ScrollBtn />
                <div className="h-[108px] bg-[repeating-conic-gradient(#d4d1ce_0_25%,#77736f_0_50%)] bg-[length:2px_2px]" />
                <div className="flex h-[221px] items-center justify-center border-b border-t border-[#8b8683] bg-gradient-to-r from-[#dfdcda] to-[#c5c2be]">
                  <svg width="11" height="19" viewBox="0 0 11 19">
                    {[0, 4, 8, 12, 16].map((y) =>
                      [0, 4, 8].map((x) => (
                        <g key={`${x}-${y}`}>
                          <rect x={x} y={y} width="2" height="2" fill="#77736f" />
                          <rect x={x + 1} y={y + 1} width="1" height="1" fill="#f5f5f5" />
                        </g>
                      )),
                    )}
                  </svg>
                </div>
                <div className="flex-1 bg-[repeating-conic-gradient(#d4d1ce_0_25%,#77736f_0_50%)] bg-[length:2px_2px]" />
                <ScrollBtn />
                <ScrollBtn down />
              </div>
            </div>
            <div className="flex h-[25px] items-center text-[12px] tracking-[0.3px] text-[#1c1a19]">
              <div className="flex h-[24px] w-[106px] items-center justify-center whitespace-nowrap rounded-[3px] border border-[#85807d] bg-gradient-to-b from-[#dedbd9] to-[#cbc7c4] pb-[2px] tracking-[0.150px]">
                Miniatiūrų juosta
              </div>
              <div className="ml-[226px] flex h-[24px] w-[110px] items-center rounded-[3px] border border-[#85807d] bg-gradient-to-b from-[#dedbd9] to-[#cbc7c4] pb-[2px]">
                <span className="w-[54px] pl-[7px] tracking-[0.1px]">Įtalpinti</span>
                <span className="h-[14px] w-[2px] border-l border-[#aaa5a2] bg-white" />
                <span className="ml-[10px]">100%</span>
              </div>
              <div className="ml-[5px] pb-[2px]"><Magnifier /></div>
              <svg width="98" height="16" viewBox="0 0 98 16" className="-mt-[2px] ml-[5px]">
                <rect x=".5" y="6.500" width="97" height="3" rx="1.500" fill="#d9d6d4" stroke="#96918e" />
                <path d="M8.500 2.500q0-1 1-1h7q1 0 1 1v7L14 14.500h-2L8.500 9.500z" fill="#e0deda" stroke="#7e7976" />
              </svg>
              <div className="ml-[5px] pb-[2px]"><Magnifier plus /></div>
              <span className="ml-[15px] pb-[2px]">13%</span>
            </div>
          </div>
        </div>
      </div>
    </div>
  );
}

export default function App() {
  return (
    <div className={`h-[711px] w-[854px] overflow-hidden bg-[#4a6878] ${sans}`}>
      <div className="flex bg-[#c9d3db]">
        <Dolphin />
      </div>
      <Gwenview />
    </div>
  );
}
